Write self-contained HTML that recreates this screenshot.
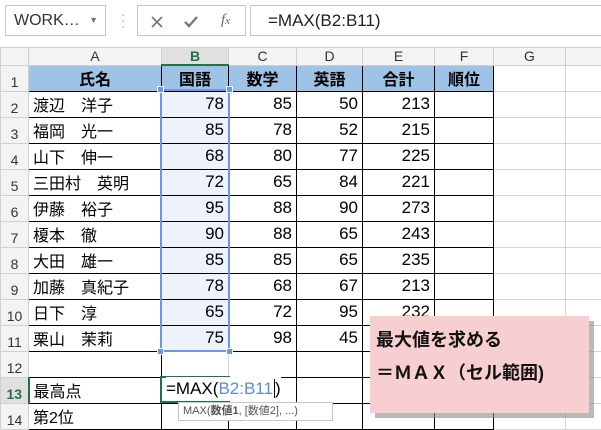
<!DOCTYPE html>
<html><head><meta charset="utf-8"><style>
*{margin:0;padding:0;box-sizing:border-box}
body{width:601px;height:427px;overflow:hidden;background:#fff;position:relative;font-family:"Liberation Sans","Noto Sans CJK JP",sans-serif}
.abs{position:absolute}
table{position:absolute;left:0;top:47px;border-collapse:collapse;table-layout:fixed;width:661px}
td{border:1px solid #d4d4d4;height:26px;font-size:17px;padding:0 4px;white-space:nowrap;overflow:hidden;color:#000}
tr.h td{height:17px;font-size:14px;text-align:center;background:#f3f3f3;color:#333;border-color:#d0d0d0;padding:0}
td.rh{background:#f3f3f3;color:#333;font-size:14px;text-align:center;vertical-align:bottom;padding:0 0 1px;border-color:#d0d0d0}
td.k{border-color:#000}
td.n{text-align:right}
td.hd{background:#9dc3e6;font-weight:bold;text-align:center;font-size:16px}
td.b{background:#edf2fc}
td.j{font-size:16px}
</style></head><body>
<div class="abs" style="left:5px;top:5px;width:101px;height:31px;border:1px solid #c6c6c6;font-size:16px;line-height:29px;padding-left:8px;color:#333">WORK…<span style="position:absolute;right:7px;top:0;font-size:9px;color:#777">▼</span></div>
<div class="abs" style="left:121px;top:11px;color:#aaa;font-size:14px;line-height:6px">·<br>·<br>·</div>
<div class="abs" style="left:137px;top:5px;width:109px;height:31px;border:1px solid #c6c6c6;color:#888">
 <svg class="abs" style="left:13px;top:10px" width="12" height="12"><path d="M1 1L11 11M11 1L1 11" stroke="#777" stroke-width="1.6"/></svg>
 <svg class="abs" style="left:46px;top:9px" width="14" height="13"><path d="M1 7L5 11L13 2" stroke="#777" stroke-width="2.4" fill="none"/></svg>
 <span class="abs" style="left:83px;top:6px;font-size:15px;font-style:italic;font-family:'Liberation Serif',serif;color:#666">f<span style="font-size:11px">x</span></span>
</div>
<div class="abs" style="left:250px;top:5px;width:360px;height:31px;border:1px solid #c6c6c6;font-size:17px;line-height:29px;padding-left:17px;color:#222">=MAX(B2:B11)</div>

<table>
<colgroup><col style="width:28px"><col style="width:133px"><col style="width:67px"><col style="width:68px"><col style="width:66px"><col style="width:72px"><col style="width:59px"><col style="width:72px"><col style="width:96px"></colgroup>
<tr class="h"><td></td><td>A</td><td style="background:#e0e0e0;color:#217346;font-weight:bold;border-bottom:2px solid #217346">B</td><td>C</td><td>D</td><td>E</td><td>F</td><td>G</td><td>H</td></tr>
<tr><td class="rh">1</td><td class="k hd">氏名</td><td class="k hd">国語</td><td class="k hd">数学</td><td class="k hd">英語</td><td class="k hd">合計</td><td class="k hd">順位</td><td></td><td></td></tr>
<tr><td class="rh">2</td><td class="k j">渡辺　洋子</td><td class="k n b">78</td><td class="k n">85</td><td class="k n">50</td><td class="k n">213</td><td class="k"></td><td></td><td></td></tr>
<tr><td class="rh">3</td><td class="k j">福岡　光一</td><td class="k n b">85</td><td class="k n">78</td><td class="k n">52</td><td class="k n">215</td><td class="k"></td><td></td><td></td></tr>
<tr><td class="rh">4</td><td class="k j">山下　伸一</td><td class="k n b">68</td><td class="k n">80</td><td class="k n">77</td><td class="k n">225</td><td class="k"></td><td></td><td></td></tr>
<tr><td class="rh">5</td><td class="k j">三田村　英明</td><td class="k n b">72</td><td class="k n">65</td><td class="k n">84</td><td class="k n">221</td><td class="k"></td><td></td><td></td></tr>
<tr><td class="rh">6</td><td class="k j">伊藤　裕子</td><td class="k n b">95</td><td class="k n">88</td><td class="k n">90</td><td class="k n">273</td><td class="k"></td><td></td><td></td></tr>
<tr><td class="rh">7</td><td class="k j">榎本　徹</td><td class="k n b">90</td><td class="k n">88</td><td class="k n">65</td><td class="k n">243</td><td class="k"></td><td></td><td></td></tr>
<tr><td class="rh">8</td><td class="k j">大田　雄一</td><td class="k n b">85</td><td class="k n">85</td><td class="k n">65</td><td class="k n">235</td><td class="k"></td><td></td><td></td></tr>
<tr><td class="rh">9</td><td class="k j">加藤　真紀子</td><td class="k n b">78</td><td class="k n">68</td><td class="k n">67</td><td class="k n">213</td><td class="k"></td><td></td><td></td></tr>
<tr><td class="rh">10</td><td class="k j">日下　淳</td><td class="k n b">65</td><td class="k n">72</td><td class="k n">95</td><td class="k n">232</td><td class="k"></td><td></td><td></td></tr>
<tr><td class="rh">11</td><td class="k j">栗山　茉莉</td><td class="k n b">75</td><td class="k n">98</td><td class="k n">45</td><td class="k n"></td><td class="k"></td><td></td><td></td></tr>
<tr><td class="rh">12</td><td class="k"></td><td class="k" style="border-color:#d4d4d4"></td><td class="k"></td><td class="k"></td><td class="k"></td><td class="k"></td><td></td><td></td></tr>
<tr><td class="rh" style="background:#e0e0e0;color:#217346;font-weight:bold;border-right:2px solid #217346">13</td><td class="k j">最高点</td><td class="k"></td><td class="k"></td><td class="k"></td><td class="k"></td><td class="k"></td><td></td><td></td></tr>
<tr><td class="rh">14</td><td class="k j">第2位</td><td class="k"></td><td class="k"></td><td class="k"></td><td class="k"></td><td class="k"></td><td></td><td></td></tr>
</table>

<div class="abs" style="left:160px;top:89px;width:70px;height:263px;border:2px solid #6d96e6"></div>
<div class="abs" style="left:157px;top:86px;width:7px;height:7px;background:#6d96e6;border:1px solid #fff"></div>
<div class="abs" style="left:226px;top:86px;width:7px;height:7px;background:#6d96e6;border:1px solid #fff"></div>
<div class="abs" style="left:157px;top:348px;width:7px;height:7px;background:#6d96e6;border:1px solid #fff"></div>
<div class="abs" style="left:226px;top:348px;width:7px;height:7px;background:#6d96e6;border:1px solid #fff"></div>

<div class="abs" style="left:160px;top:376px;width:70px;height:27px;border:2px solid #217346;background:#fff"></div>
<div class="abs" style="left:166px;top:377px;font-size:17px;line-height:24px;background:#fff;white-space:nowrap">=MAX(<span style="color:#5b8be0">B2:B11</span><span style="border-left:1px solid #000;margin-left:1px"></span>)</div>
<div class="abs" style="left:178px;top:402px;width:155px;height:19px;border:1px solid #c8c8c8;background:#fff;font-size:11px;color:#555;line-height:17px;padding-left:4px;white-space:nowrap">MAX(<b>数値1</b>, [数値2], ...)</div>

<div class="abs" style="left:375px;top:321px;width:219px;height:97px;background:#8a8a8a;opacity:.6"></div>
<div class="abs" style="left:370px;top:316px;width:219px;height:97px;background:#f8cfd0;font-size:18px;font-weight:bold;color:#111;padding:8px 0 0 6px;line-height:33px;white-space:nowrap">最大値を求める<br>＝ＭＡＸ（セル範囲)</div>
</body></html>
